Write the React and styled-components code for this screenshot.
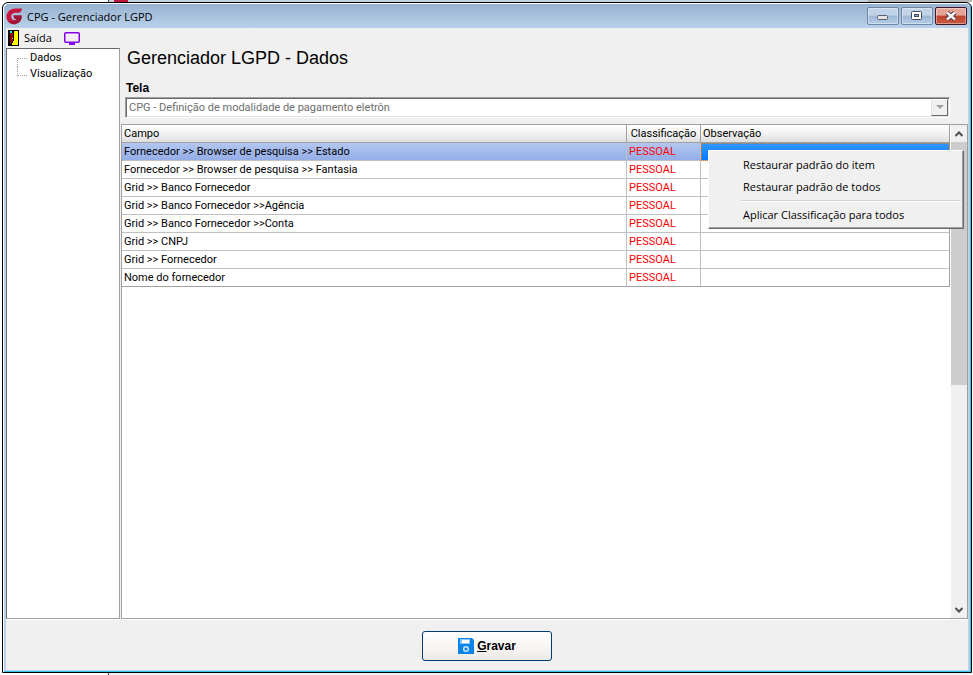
import styled, { createGlobalStyle } from "styled-components";

const GlobalStyle = createGlobalStyle`
  :root {
    --font-ui: "Open Sans", "Noto Sans", sans-serif;
    --font-grid: Roboto, "Liberation Sans", sans-serif;
    --font-bold: "Liberation Sans", Arial, sans-serif;
    --face: #f0f0f0;
    --line: #a0a0a0;
    --cell-line: #c0c0c0;
  }

  * {
    box-sizing: border-box;
  }

  body {
    margin: 0;
    background-color: #fff;
    color: #000;
    font-family: var(--font-grid);
    font-size: 11px;
  }

  button,
  select {
    font: inherit;
    color: inherit;
  }

  svg {
    flex: none;
  }
`;

const Desktop = styled.div`
  display: flex;
  flex-direction: column;
  height: 100vh;
  padding: 0 1px 0 2px;
`;

const BackTitle = styled.div`
  flex: none;
  height: 2px;
  margin-left: 106px;
  border-left: 1px solid #444;
  background-color: #b4b4b4;

  &::before {
    content: "";
    display: block;
    width: 88%;
    height: 2px;
    background: linear-gradient(90deg, #c5d3de 5px, #c0143c 5px 19px, #c5d3de 19px);
  }
`;

const BackFooter = styled.div`
  flex: none;
  height: 2px;
  margin-left: 106px;
  border-left: 1px solid #444;
  background-color: #eef1f5;
`;

const Window = styled.main`
  flex: 1;
  min-height: 0;
  display: flex;
  flex-direction: column;
  border: 1px solid #000;
  border-radius: 6px 6px 0 0;
  background-color: #b9d1ea;
  box-shadow: inset 1px 1px 0 #fff, inset -1px -1px 0 #2fc4ea;
  padding: 1px 3px 2px 3px;
`;

const TitleBar = styled.header`
  flex: none;
  display: flex;
  align-items: center;
  height: 24px;
  margin: 0 -2px;
  padding: 0 2px;
  border-radius: 5px 5px 0 0;
  background: linear-gradient(#97b2d0, #b9d1ea);
`;

const TitleText = styled.h1`
  flex: 1;
  margin: 0;
  padding-left: 4px;
  font-family: var(--font-ui);
  font-size: 11px;
  font-weight: 400;
`;

const WindowButtons = styled.div`
  display: flex;
  align-self: flex-start;
  gap: 2px;
  padding: 3px 1px 0 0;
`;

const WindowButton = styled.button`
  display: flex;
  align-items: center;
  justify-content: center;
  width: 32px;
  height: 18px;
  padding: 0;
  border: 1px solid ${({ $close }) => ($close ? "#431422" : "#6f87a5")};
  border-radius: 2px;
  box-shadow: inset 0 0 0 1px rgba(255, 255, 255, 0.4);
  background: ${({ $close }) =>
    $close
      ? "linear-gradient(#e6a397 0 45%, #c1412c 50%, #c8593f)"
      : "linear-gradient(#c1d3e8 0 45%, #9db7d5 50%, #b4cce6)"};
`;

const Client = styled.div`
  flex: 1;
  min-height: 0;
  display: flex;
  flex-direction: column;
  background-color: var(--face);
`;

const Toolbar = styled.nav`
  flex: none;
  display: flex;
  align-items: center;
  gap: 12px;
  height: 20px;
  padding-left: 2px;
`;

const ToolButton = styled.button`
  display: flex;
  align-items: center;
  gap: 5px;
  padding: 0;
  border: 0;
  background: none;
  font-family: var(--font-ui);
  font-size: 11px;
  line-height: 18px;
`;

const Workspace = styled.div`
  flex: 1;
  min-height: 0;
  display: flex;
  gap: 1px;
`;

const Tree = styled.ul`
  flex: none;
  width: 114px;
  margin: 0;
  padding: 1px 0 0 10px;
  list-style: none;
  background-color: #fff;
  border: 1px solid var(--line);
  border-left-color: #696969;
  border-top-color: #696969;
`;

const TreeItem = styled.li`
  display: flex;
  height: 16px;

  &::before {
    content: "";
    width: 9px;
    height: ${({ $first }) => ($first ? "8px" : "9px")};
    margin-top: ${({ $first }) => ($first ? "8px" : "0")};
    border-left: 1px dotted #a0a0a0;
    border-top: ${({ $first }) => ($first ? "1px dotted #a0a0a0" : "0")};
    border-bottom: ${({ $first }) => ($first ? "0" : "1px dotted #a0a0a0")};
  }
`;

const TreeButton = styled.button`
  padding: 0 0 0 3px;
  border: 0;
  background: none;
  line-height: 16px;
`;

const Content = styled.section`
  flex: 1;
  min-width: 0;
  display: flex;
  flex-direction: column;
`;

const Heading = styled.h2`
  margin: 0;
  padding-left: 6px;
  font-family: var(--font-bold);
  font-size: 18px;
  font-weight: 400;
  line-height: 20px;
`;

const Field = styled.div`
  display: flex;
  flex-direction: column;
  padding: 12px 18px 6px 4px;
`;

const FieldLabel = styled.label`
  padding: 0 0 1px 1px;
  font-family: var(--font-bold);
  font-size: 12px;
  font-weight: 700;
  line-height: 16px;
`;

const Combo = styled.div`
  display: flex;
  height: 21px;
  border: 1px solid;
  border-color: #a0a0a0 #fff #fff #a0a0a0;
  background-color: #fff;
  box-shadow: inset 1px 1px 0 #696969, inset -1px -1px 0 #e3e3e3;
  padding: 1px;
`;

const ComboSelect = styled.select`
  flex: 1;
  min-width: 0;
  padding: 0 2px;
  border: 0;
  appearance: none;
  background: none;

  &:disabled {
    color: #6d6d6d;
    opacity: 1;
  }
`;

const ComboArrow = styled.span`
  display: flex;
  align-items: center;
  justify-content: center;
  width: 17px;
  border: 1px solid;
  border-color: #fff #696969 #696969 #e3e3e3;
  background-color: var(--face);
`;

const GridPanel = styled.div`
  flex: 1;
  min-height: 0;
  display: flex;
  border: 1px solid var(--line);
  background-color: #fff;
`;

const GridArea = styled.div`
  flex: 1;
  min-width: 0;
`;

const Table = styled.table`
  width: 100%;
  table-layout: fixed;
  border-collapse: separate;
  border-spacing: 0;
  border-bottom: 1px solid var(--line);
  font-size: 11px;
`;

const HeadCell = styled.th`
  width: ${({ $width }) => $width || "auto"};
  height: 18px;
  padding: 1px 2px 0;
  border-right: 1px solid var(--line);
  border-bottom: 1px solid var(--line);
  background: linear-gradient(#fff, #f2f2f2 50%, #dedede);
  font-weight: 400;
  line-height: 16px;
  text-align: ${({ $center }) => ($center ? "center" : "left")};
  white-space: nowrap;
`;

const Row = styled.tr`
  background: ${({ $selected }) =>
    $selected ? "linear-gradient(#b3c7f1, #92ace6)" : "#fff"};
`;

const Cell = styled.td`
  position: relative;
  height: 18px;
  padding: 1px 2px 0;
  border-right: 1px solid var(--cell-line);
  border-bottom: 1px solid var(--cell-line);
  color: ${({ $alert }) => ($alert ? "#f00" : "#000")};
  line-height: 16px;
  white-space: nowrap;

  &:last-child {
    border-right-color: var(--line);
  }

  ${Row}:last-child & {
    height: 17px;
    border-bottom: 0;
  }
`;

const FocusCell = styled(Cell)`
  background: linear-gradient(#3399ff, #0a78ff);
  outline: 1px dotted #e08020;
  outline-offset: -1px;
`;

const Menu = styled.div`
  position: absolute;
  top: 7px;
  left: 7px;
  z-index: 2;
  width: 256px;
  padding: 3px 2px 2px;
  border: 1px solid;
  border-color: #fff #696969 #696969 #fff;
  background-color: var(--face);
  box-shadow: inset -1px -1px 0 #a0a0a0;
`;

const MenuItem = styled.button`
  display: block;
  width: 100%;
  padding: 0 0 0 32px;
  border: 0;
  background: none;
  font-family: var(--font-ui);
  font-size: 11px;
  line-height: 22px;
  text-align: left;
`;

const MenuLine = styled.hr`
  height: 2px;
  margin: 2px 0 2px 30px;
  border: 0;
  border-top: 1px solid #d0d0d0;
  background-color: #fff;
`;

const ScrollBar = styled.div`
  flex: none;
  display: flex;
  flex-direction: column;
  width: 17px;
  border-left: 1px solid #fff;
  background-color: var(--face);
`;

const ScrollTrack = styled.div`
  flex: 1;
`;

const ScrollThumb = styled.div`
  height: 53%;
  background-color: #cdcdcd;
`;

const ScrollButton = styled.button`
  display: flex;
  align-items: center;
  justify-content: center;
  width: 16px;
  height: 17px;
  padding: 0;
  border: 0;
  background: none;
`;

const Footer = styled.footer`
  flex: none;
  display: flex;
  justify-content: center;
  padding: 11px 0 9px;
  border-top: 1px solid #fff;
`;

const SaveButton = styled.button`
  display: flex;
  align-items: center;
  justify-content: center;
  gap: 3px;
  width: 130px;
  height: 30px;
  padding: 0;
  border: 1px solid #003c74;
  border-radius: 3px;
  background: linear-gradient(#fff, #f6f4f2 60%, #ece8e4);
  font-family: var(--font-bold);
  font-size: 12px;
  font-weight: 700;
`;

const LogoIcon = () => (
  <svg width="17" height="17" viewBox="0 0 17 17" aria-hidden="true">
    <path
      d="M16 0.5 C12 0.5 7 0 4 2 C1 4 0 7 0.5 10 C1.5 14 5 16.5 9 16.2 L10 12.3 C7 12.6 5.2 11 5.2 8.6 C5.2 6 7 4.8 10 4.8 H13.5 C15 4 15.8 2.5 16 0.5 Z"
      fill="#c8173f"
    />
    <path d="M7.5 7.2 H15.8 C16.4 11 14 15.6 9 16.2 C5 16.4 2.5 14.5 1.2 12 C4 14 8 13.5 10.5 11 H9 C8 10.5 7.5 9 7.5 7.2 Z" fill="#a31538" />
  </svg>
);

const DoorIcon = () => (
  <svg width="11" height="16" viewBox="0 0 11 16" shapeRendering="crispEdges" aria-hidden="true">
    <rect width="11" height="16" fill="#000" />
    <rect x="1" y="1" width="9" height="14" fill="#ff0" />
    <path d="M1 1 H6 V11 H5 V13 H4 V15 H1 Z" fill="#000" />
    <path d="M2 3 H5 V11 H4 V13 H3 V14 H2 Z" fill="#900000" />
    <rect x="2" y="1" width="2" height="2" fill="#0ff" />
    <rect x="4" y="8" width="1" height="1" fill="#ff0" />
  </svg>
);

const MonitorIcon = () => (
  <svg width="16" height="13" viewBox="0 0 16 13" aria-hidden="true">
    <rect x="0.75" y="0.75" width="14.5" height="9.5" rx="1" fill="#f3eef8" stroke="#8a00e6" strokeWidth="1.5" />
    <path d="M6 10 H10 V11 H11 V13 H5 V11 H6 Z" fill="#8a00e6" />
  </svg>
);

const DiskIcon = () => (
  <svg width="16" height="16" viewBox="0 0 16 16" aria-hidden="true">
    <path d="M0 0 H14 L16 2 V16 H0 Z" fill="#0b84e8" />
    <path d="M2 1 H12 V6 H2 Z" fill="#8cc6f5" />
    <path d="M4 2 H11 V5 H4 Z" fill="#fff" />
    <circle cx="8" cy="11" r="2.3" fill="none" stroke="#c9e6fb" strokeWidth="1.5" />
  </svg>
);

const MinimizeIcon = () => (
  <svg width="12" height="8" viewBox="0 0 12 8" aria-hidden="true">
    <rect x="0.5" y="3.5" width="10" height="4" rx="1" fill="#e4e4e4" stroke="#5b5f68" />
  </svg>
);

const MaximizeIcon = () => (
  <svg width="12" height="10" viewBox="0 0 12 10" aria-hidden="true">
    <rect x="0.5" y="0.5" width="10" height="8" rx="1" fill="#fff" stroke="#444a56" />
    <rect x="3.5" y="3.5" width="4" height="2" fill="#8fa9c8" stroke="#444a56" />
  </svg>
);

const CloseIcon = () => (
  <svg width="12" height="10" viewBox="0 0 12 10" aria-hidden="true">
    <path d="M2 1.5 L10 8.5 M10 1.5 L2 8.5" stroke="#4b3b44" strokeWidth="4.4" />
    <path d="M2 1.5 L10 8.5 M10 1.5 L2 8.5" stroke="#f4f4f4" strokeWidth="2.4" />
  </svg>
);

const Chevron = ({ down }) => (
  <svg width="8" height="6" viewBox="0 0 8 6" aria-hidden="true">
    <path
      d={down ? "M0.5 1 L4 4.5 L7.5 1" : "M0.5 5 L4 1.5 L7.5 5"}
      fill="none"
      stroke="#505050"
      strokeWidth="2"
    />
  </svg>
);

const rows = [
  "Fornecedor >> Browser de pesquisa >> Estado",
  "Fornecedor >> Browser de pesquisa >> Fantasia",
  "Grid >> Banco Fornecedor",
  "Grid >> Banco Fornecedor >>Agência",
  "Grid >> Banco Fornecedor >>Conta",
  "Grid >> CNPJ",
  "Grid >> Fornecedor",
  "Nome do fornecedor",
];

const ContextMenu = () => (
  <Menu role="menu">
    <MenuItem role="menuitem">Restaurar padrão do item</MenuItem>
    <MenuItem role="menuitem">Restaurar padrão de todos</MenuItem>
    <MenuLine />
    <MenuItem role="menuitem">Aplicar Classificação para todos</MenuItem>
  </Menu>
);

const FieldsGrid = () => (
  <GridPanel>
    <GridArea>
      <Table>
        <thead>
          <tr>
            <HeadCell>Campo</HeadCell>
            <HeadCell $width="74px" $center>
              Classificação
            </HeadCell>
            <HeadCell $width="249px">Observação</HeadCell>
          </tr>
        </thead>
        <tbody>
          {rows.map((name, index) => (
            <Row key={name} $selected={index === 0}>
              <Cell>{name}</Cell>
              <Cell $alert>PESSOAL</Cell>
              {index === 0 ? (
                <FocusCell>
                  <ContextMenu />
                </FocusCell>
              ) : (
                <Cell />
              )}
            </Row>
          ))}
        </tbody>
      </Table>
    </GridArea>
    <ScrollBar>
      <ScrollButton aria-label="Rolar para cima">
        <Chevron />
      </ScrollButton>
      <ScrollTrack>
        <ScrollThumb />
      </ScrollTrack>
      <ScrollButton aria-label="Rolar para baixo">
        <Chevron down />
      </ScrollButton>
    </ScrollBar>
  </GridPanel>
);

export default function App() {
  return (
    <>
      <GlobalStyle />
      <Desktop>
        <BackTitle />
        <Window>
          <TitleBar>
            <LogoIcon />
            <TitleText>CPG - Gerenciador LGPD</TitleText>
            <WindowButtons>
              <WindowButton aria-label="Minimizar">
                <MinimizeIcon />
              </WindowButton>
              <WindowButton aria-label="Maximizar">
                <MaximizeIcon />
              </WindowButton>
              <WindowButton $close aria-label="Fechar">
                <CloseIcon />
              </WindowButton>
            </WindowButtons>
          </TitleBar>
          <Client>
            <Toolbar>
              <ToolButton>
                <DoorIcon />
                Saída
              </ToolButton>
              <ToolButton aria-label="Monitor">
                <MonitorIcon />
              </ToolButton>
            </Toolbar>
            <Workspace>
              <Tree>
                <TreeItem $first>
                  <TreeButton>Dados</TreeButton>
                </TreeItem>
                <TreeItem>
                  <TreeButton>Visualização</TreeButton>
                </TreeItem>
              </Tree>
              <Content>
                <Heading>Gerenciador LGPD - Dados</Heading>
                <Field>
                  <FieldLabel htmlFor="tela">Tela</FieldLabel>
                  <Combo>
                    <ComboSelect id="tela" disabled>
                      <option>CPG - Definição de modalidade de pagamento eletrôn</option>
                    </ComboSelect>
                    <ComboArrow>
                      <svg width="8" height="5" viewBox="0 0 8 5" aria-hidden="true">
                        <path d="M0 0 H8 L4 4 Z" fill="#a0a0a0" />
                      </svg>
                    </ComboArrow>
                  </Combo>
                </Field>
                <FieldsGrid />
              </Content>
            </Workspace>
            <Footer>
              <SaveButton>
                <DiskIcon />
                <span>
                  <u>G</u>ravar
                </span>
              </SaveButton>
            </Footer>
          </Client>
        </Window>
        <BackFooter />
      </Desktop>
    </>
  );
}
